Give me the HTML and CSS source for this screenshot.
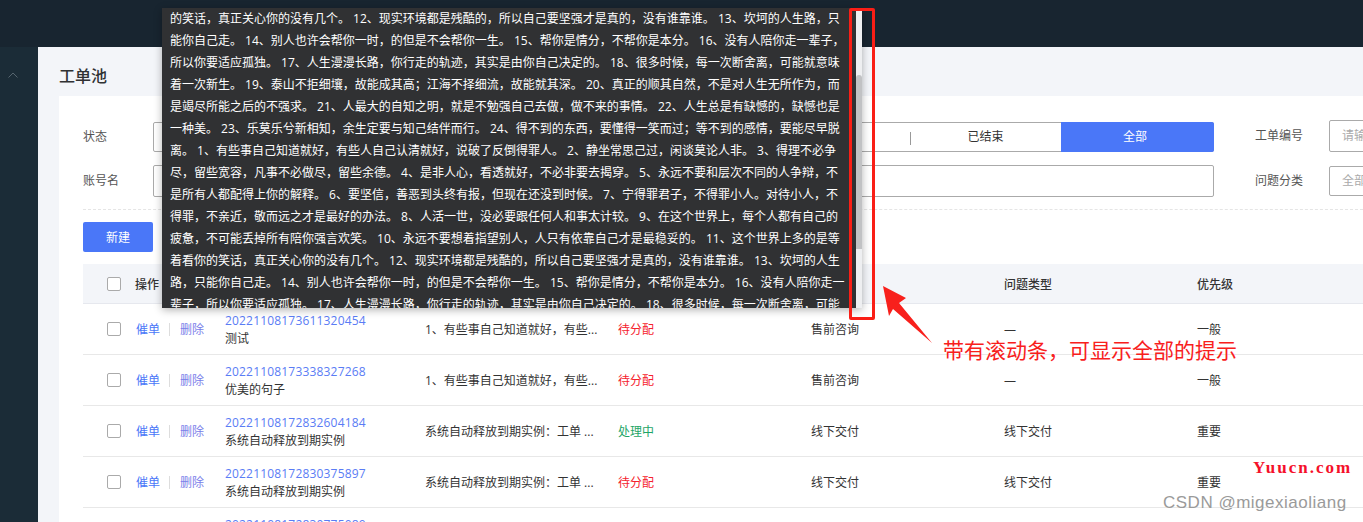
FILE: index.html
```html
<!DOCTYPE html>
<html lang="zh-CN">
<head>
<meta charset="utf-8">
<title>工单池</title>
<link rel="stylesheet" href="styles.css">
</head>
<body>
<header class="topbar"></header>
<div class="shell">
  <aside class="sidebar">
    <svg class="chevron" width="10" height="6" viewBox="0 0 10 6"><path d="M0.5 5.5L5 1l4.5 4.5" fill="none" stroke="#56656f" stroke-width="1"/></svg>
  </aside>
  <main class="main">
    <h1 class="title">工单池</h1>
    <section class="card">
      <div class="filter-row">
        <label class="label">状态</label>
        <div class="segments">
          <span class="seg"></span><span class="seg"></span><span class="seg"></span><span class="seg"></span><span class="seg"></span>
          <span class="seg seg-divided">已结束</span>
          <span class="seg seg-active">全部</span>
        </div>
        <label class="label label-right">工单编号</label>
        <div class="field field-tall">请输入工单编号</div>
      </div>
      <div class="filter-row filter-row-second">
        <label class="label">账号名</label>
        <div class="wide-input"></div>
        <label class="label label-right">问题分类</label>
        <div class="field">全部</div>
      </div>
      <div class="toolbar">
        <button class="btn-primary">新建</button>
      </div>
      <div class="table">
        <div class="row row-head">
          <span class="cell-check"><i class="checkbox"></i></span>
          <span class="cell-op">操作</span>
          <span class="cell-id"></span>
          <span class="cell-desc"></span>
          <span class="cell-col"></span>
          <span class="cell-col"></span>
          <span class="cell-col">问题类型</span>
          <span class="cell-col">优先级</span>
        </div>
        <div class="row">
          <span class="cell-check"><i class="checkbox"></i></span>
          <span class="cell-op ops"><a class="link-a">催单</a><i class="sep"></i><a class="link-b">删除</a></span>
          <span class="cell-id"><a class="order-no">20221108173611320454</a><span class="order-title">测试</span></span>
          <span class="cell-desc">1、有些事自己知道就好，有些...</span>
          <span class="cell-col st-red">待分配</span>
          <span class="cell-col">售前咨询</span>
          <span class="cell-col">—</span>
          <span class="cell-col">一般</span>
        </div>
        <div class="row">
          <span class="cell-check"><i class="checkbox"></i></span>
          <span class="cell-op ops"><a class="link-a">催单</a><i class="sep"></i><a class="link-b">删除</a></span>
          <span class="cell-id"><a class="order-no">20221108173338327268</a><span class="order-title">优美的句子</span></span>
          <span class="cell-desc">1、有些事自己知道就好，有些...</span>
          <span class="cell-col st-red">待分配</span>
          <span class="cell-col">售前咨询</span>
          <span class="cell-col">—</span>
          <span class="cell-col">一般</span>
        </div>
        <div class="row">
          <span class="cell-check"><i class="checkbox"></i></span>
          <span class="cell-op ops"><a class="link-a">催单</a><i class="sep"></i><a class="link-b">删除</a></span>
          <span class="cell-id"><a class="order-no">20221108172832604184</a><span class="order-title">系统自动释放到期实例</span></span>
          <span class="cell-desc">系统自动释放到期实例：工单 ...</span>
          <span class="cell-col st-green">处理中</span>
          <span class="cell-col">线下交付</span>
          <span class="cell-col">线下交付</span>
          <span class="cell-col">重要</span>
        </div>
        <div class="row">
          <span class="cell-check"><i class="checkbox"></i></span>
          <span class="cell-op ops"><a class="link-a">催单</a><i class="sep"></i><a class="link-b">删除</a></span>
          <span class="cell-id"><a class="order-no">20221108172830375897</a><span class="order-title">系统自动释放到期实例</span></span>
          <span class="cell-desc">系统自动释放到期实例：工单 ...</span>
          <span class="cell-col st-red">待分配</span>
          <span class="cell-col">线下交付</span>
          <span class="cell-col">线下交付</span>
          <span class="cell-col">重要</span>
        </div>
        <div class="row row-cut">
          <span class="cell-check"></span>
          <span class="cell-op"></span>
          <span class="cell-id"><a class="order-no">20221108172830775089</a></span>
        </div>
      </div>
    </section>
  </main>
</div>

<div class="tooltip">
  <div class="tooltip-text">
    <div>的笑话，真正关心你的没有几个。 12、现实环境都是残酷的，所以自己要坚强才是真的，没有谁靠谁。 13、坎坷的人生路，只</div>
    <div>能你自己走。 14、别人也许会帮你一时，的但是不会帮你一生。 15、帮你是情分，不帮你是本分。 16、没有人陪你走一辈子，</div>
    <div>所以你要适应孤独。 17、人生漫漫长路，你行走的轨迹，其实是由你自己决定的。 18、很多时候，每一次断舍离，可能就意味</div>
    <div>着一次新生。 19、泰山不拒细壤，故能成其高；江海不择细流，故能就其深。 20、真正的顺其自然，不是对人生无所作为，而</div>
    <div>是竭尽所能之后的不强求。 21、人最大的自知之明，就是不勉强自己去做，做不来的事情。 22、人生总是有缺憾的，缺憾也是</div>
    <div>一种美。 23、乐莫乐兮新相知，余生定要与知己结伴而行。 24、得不到的东西，要懂得一笑而过；等不到的感情，要能尽早脱</div>
    <div>离。 1、有些事自己知道就好，有些人自己认清就好，说破了反倒得罪人。 2、静坐常思己过，闲谈莫论人非。 3、得理不必争</div>
    <div>尽，留些宽容，凡事不必做尽，留些余德。 4、是非人心，看透就好，不必非要去揭穿。 5、永远不要和层次不同的人争辩，不</div>
    <div>是所有人都配得上你的解释。 6、要坚信，善恶到头终有报，但现在还没到时候。 7、宁得罪君子，不得罪小人。对待小人，不</div>
    <div>得罪，不亲近，敬而远之才是最好的办法。 8、人活一世，没必要跟任何人和事太计较。 9、在这个世界上，每个人都有自己的</div>
    <div>疲惫，不可能丢掉所有陪你强言欢笑。 10、永远不要想着指望别人，人只有依靠自己才是最稳妥的。 11、这个世界上多的是等</div>
    <div>着看你的笑话，真正关心你的没有几个。 12、现实环境都是残酷的，所以自己要坚强才是真的，没有谁靠谁。 13、坎坷的人生</div>
    <div>路，只能你自己走。 14、别人也许会帮你一时，的但是不会帮你一生。 15、帮你是情分，不帮你是本分。 16、没有人陪你走一</div>
    <div>辈子，所以你要适应孤独。 17、人生漫漫长路，你行走的轨迹，其实是由你自己决定的。 18、很多时候，每一次断舍离，可能</div>
  </div>
  <div class="scroll-track"><div class="scroll-thumb"></div></div>
</div>

<div class="mark-box"></div>
<svg class="mark-arrow" width="52" height="60" viewBox="0 0 52 60"><polygon points="1,1 24,13 17,18 50,58 11,24 7,31" fill="#f8201c"/></svg>
<div class="mark-text">带有滚动条，可显示全部的提示</div>
<div class="wm-site">Yuucn.com</div>
<div class="wm-csdn">CSDN @migexiaoliang</div>
</body>
</html>
```
FILE: styles.css
```css
* { box-sizing: border-box; }
html, body { margin: 0; height: 522px; overflow: hidden; }
body {
  position: relative;
  font-family: "Open Sans", "Noto Sans CJK SC", sans-serif;
  font-size: 12px;
  color: #333;
  background: #f3f5f9;
}
.topbar { height: 47px; background: #182530; }
.shell { display: flex; height: 475px; }
.sidebar { width: 38px; flex: none; background: #1b2c37; padding: 25px 0 0 8px; }
.chevron { display: block; }
.main { flex: 1; min-width: 0; padding-left: 21px; overflow: hidden; }
.title {
  margin: 0;
  height: 49px;
  line-height: 58px;
  font-size: 16px;
  font-weight: 500;
  color: #303133;
}
.card { background: #fff; height: 426px; padding: 24px 0 0 24px; overflow: hidden; }
.filter-row { display: flex; align-items: flex-end; height: 32px; width: 1400px; }
.filter-row-second { margin-top: 13px; align-items: center; }
.label { width: 70px; flex: none; color: #555; line-height: 30px; }
.filter-row:first-child .label { align-self: center; padding-top: 2px; }
.label-right { width: 74px; margin-left: 41px; }
.filter-row:first-child .label-right { padding-top: 0; }
.segments {
  display: flex;
  width: 1061px;
  height: 30px;
  flex: none;
  border: 1px solid #aaa;
  border-radius: 2px;
}
.seg { flex: 1; text-align: center; line-height: 28px; position: relative; }
.seg-divided::before {
  content: "";
  position: absolute;
  left: 0;
  top: 9px;
  height: 13px;
  border-left: 1px solid #999;
}
.seg-active {
  flex: none;
  width: 153px;
  margin: -1px -1px -1px 0;
  padding-right: 5px;
  background: #4a77f8;
  color: #fff;
  line-height: 30px;
  border-radius: 0 2px 2px 0;
}
.wide-input { width: 1061px; height: 32px; flex: none; border: 1px solid #aaa; border-radius: 2px; }
.field {
  width: 150px;
  height: 30px;
  flex: none;
  border: 1px solid #aaa;
  border-radius: 2px;
  padding-left: 12px;
  line-height: 28px;
  color: #aaa;
  white-space: nowrap;
}
.field-tall { height: 32px; line-height: 30px; }
.toolbar { margin-top: 12px; border-top: 1px dashed #e5e5e5; padding-top: 12px; width: 1280px; }
.btn-primary {
  display: block;
  width: 70px;
  height: 30px;
  border: 0;
  border-radius: 2px;
  background: #4a77f8;
  color: #fff;
  font: inherit;
}
.table { margin-top: 12px; }
.row {
  display: grid;
  grid-template-columns: 52px 90px 200px 193px 193px 193px 193px 166px;
  align-items: center;
  height: 51px;
  border-bottom: 1px solid #e8e8e8;
}
.row-head {
  height: 40px;
  background: #f3f5f9;
  font-weight: 500;
  border-bottom-color: #e6e8ee;
}
.row-cut { align-items: start; padding-top: 7px; }
.cell-check { padding-left: 24px; display: flex; }
.checkbox {
  display: block;
  width: 14px;
  height: 14px;
  border: 1px solid #aaa;
  border-radius: 2px;
  background: #fff;
}
.ops { display: flex; align-items: center; padding-left: 1px; }
.link-a { color: #4a77f8; }
.link-b { color: #7a80ea; }
.sep { width: 1px; height: 13px; background: #ddd; margin: 0 10px 0 9px; }
.cell-id { display: flex; flex-direction: column; line-height: 18px; padding-top: 1px; }
.order-no { color: #5a7cf5; letter-spacing: 0.18px; }
.order-title { color: #333; }
.st-red { color: #f5222d; }
.st-green { color: #1ea567; }

.tooltip {
  position: absolute;
  left: 162px;
  top: 8px;
  width: 700px;
  height: 300px;
  display: flex;
  box-shadow: 0 2px 8px rgba(0, 0, 0, 0.3);
}
.tooltip-text {
  width: 694px;
  flex: none;
  height: 300px;
  overflow: hidden;
  padding-left: 8px;
  background: #303133;
  color: #fff;
  line-height: 22px;
  white-space: nowrap;
}
.tooltip-text div { height: 22px; }
.scroll-track { width: 6px; flex: none; background: #eeeff1; padding-top: 67px; }
.scroll-thumb { height: 174px; background: #c1c2c4; border-radius: 3px 3px 0 0; }

.mark-box {
  position: absolute;
  left: 849px;
  top: 8px;
  width: 26px;
  height: 312px;
  border: 3px solid #fa1e16;
  border-radius: 2px;
}
.mark-arrow { position: absolute; left: 882px; top: 285px; }
.mark-text {
  position: absolute;
  left: 943px;
  top: 335px;
  font-size: 21px;
  line-height: 30px;
  color: #f8201c;
  white-space: nowrap;
}
.wm-site {
  position: absolute;
  left: 1253px;
  top: 457px;
  font-family: "Liberation Serif", serif;
  font-size: 17px;
  font-weight: 700;
  letter-spacing: 2px;
  line-height: 22px;
  color: #f5102a;
}
.wm-csdn {
  position: absolute;
  left: 1163px;
  top: 491px;
  font-family: "Liberation Sans", sans-serif;
  font-size: 17px;
  letter-spacing: 0.5px;
  line-height: 24px;
  color: #9a9a9a;
  white-space: nowrap;
}
```
